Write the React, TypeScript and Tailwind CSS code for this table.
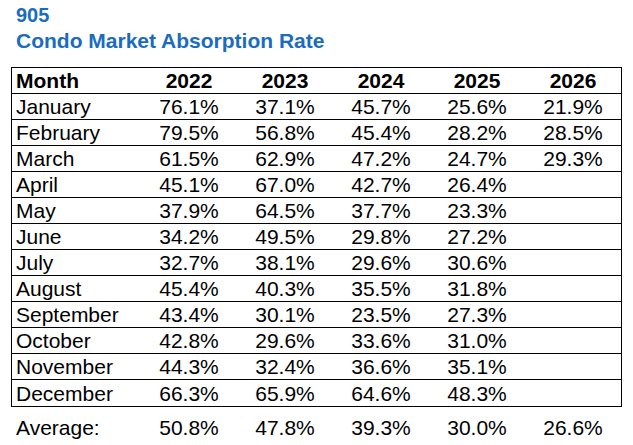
const years = ["2022", "2023", "2024", "2025", "2026"];

const rows: [string, string[]][] = [
  ["January", ["76.1%", "37.1%", "45.7%", "25.6%", "21.9%"]],
  ["February", ["79.5%", "56.8%", "45.4%", "28.2%", "28.5%"]],
  ["March", ["61.5%", "62.9%", "47.2%", "24.7%", "29.3%"]],
  ["April", ["45.1%", "67.0%", "42.7%", "26.4%", ""]],
  ["May", ["37.9%", "64.5%", "37.7%", "23.3%", ""]],
  ["June", ["34.2%", "49.5%", "29.8%", "27.2%", ""]],
  ["July", ["32.7%", "38.1%", "29.6%", "30.6%", ""]],
  ["August", ["45.4%", "40.3%", "35.5%", "31.8%", ""]],
  ["September", ["43.4%", "30.1%", "23.5%", "27.3%", ""]],
  ["October", ["42.8%", "29.6%", "33.6%", "31.0%", ""]],
  ["November", ["44.3%", "32.4%", "36.6%", "35.1%", ""]],
  ["December", ["66.3%", "65.9%", "64.6%", "48.3%", ""]],
];

const average = ["50.8%", "47.8%", "39.3%", "30.0%", "26.6%"];

const gridCols = "grid grid-cols-[129px_repeat(5,96px)] items-center";

export default function App() {
  return (
    <div className="w-[633px] h-[445px] bg-white text-black font-['Liberation_Sans',Arial,sans-serif] overflow-hidden">
      {/* title */}
      <div className="pl-[16px] pt-[3px] font-bold text-[#1a6cc0]">
        <div className="text-[20px] leading-[25px]">905</div>
        <div className="text-[21px] leading-[25px]">Condo Market Absorption Rate</div>
      </div>

      {/* table */}
      <div className="ml-[11px] mt-[14px] w-[611px] border border-black text-[21px]">
        <div className={`${gridCols} h-[26px] border-b border-black font-bold`}>
          <div className="pl-[4px] leading-[25px]">Month</div>
          {years.map((y) => (
            <div key={y} className="text-center leading-[25px]">
              {y}
            </div>
          ))}
        </div>
        {rows.map(([month, vals], i) => (
          <div
            key={month}
            className={`${gridCols} h-[26px] ${i < rows.length - 1 ? "border-b border-black" : ""}`}
          >
            <div className="pl-[4px] leading-[25px]">{month}</div>
            {vals.map((v, j) => (
              <div key={j} className="text-center leading-[25px]">
                {v}
              </div>
            ))}
          </div>
        ))}
      </div>

      {/* average row */}
      <div className="ml-[11px] mt-[8px] w-[611px] border-x border-transparent text-[21px]">
        <div className={`${gridCols} h-[26px]`}>
          <div className="pl-[4px] leading-[26px]">Average:</div>
          {average.map((v, j) => (
            <div key={j} className="text-center leading-[26px]">
              {v}
            </div>
          ))}
        </div>
      </div>
    </div>
  );
}
